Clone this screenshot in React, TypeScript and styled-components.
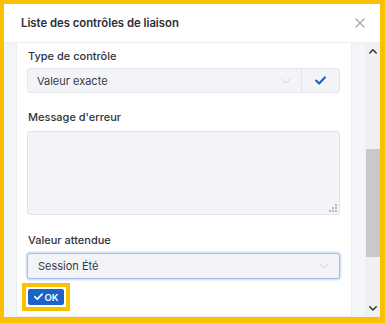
import styled, { createGlobalStyle } from 'styled-components';

const GlobalStyle = createGlobalStyle`
  html, body {
    margin: 0;
    padding: 0;
    background: #ffffff;
  }
  body {
    font-family: Inter, "Noto Sans", "Liberation Sans", sans-serif;
  }
  * {
    box-sizing: border-box;
  }
`;

const Frame = styled.div`
  width: 385px;
  height: 323px;
  border: 4px solid #fbc000;
  border-right-width: 5px;
  border-bottom-width: 6px;
  display: flex;
  flex-direction: column;
  overflow: hidden;
  background: #ffffff;
`;

const Header = styled.header`
  height: 39px;
  flex-shrink: 0;
  display: flex;
  align-items: center;
  justify-content: space-between;
  padding: 0 12px 0 17px;
  border-bottom: 1px solid #eceef3;
`;

const Title = styled.h2`
  margin: 0;
  font-size: 11.3px;
  font-weight: 600;
  color: #2b2e38;
`;

const CloseButton = styled.button`
  width: 16px;
  height: 16px;
  padding: 0;
  border: none;
  background: transparent;
  display: flex;
  align-items: center;
  justify-content: center;
`;

const Body = styled.div`
  flex: 1;
  display: flex;
  background: #f4f5f9;
  padding-left: 12px;
  min-height: 0;
`;

const Card = styled.section`
  width: 336px;
  background: #ffffff;
  border: 1px solid #eaecf1;
  border-top: none;
  border-radius: 0 0 3px 3px;
  padding: 6px 11px 10px 10px;
  display: flex;
  flex-direction: column;
  align-self: flex-start;
`;

const Field = styled.div<{ $gap: number; $after?: number }>`
  display: flex;
  flex-direction: column;
  gap: ${({ $gap }) => $gap}px;
  margin-bottom: ${({ $after }) => $after ?? 0}px;
`;

const Label = styled.label`
  font-size: 11px;
  line-height: 14px;
  font-weight: 500;
  color: #2f3340;
  padding-left: 1px;
`;

const Group = styled.div`
  height: 25px;
  display: flex;
  border: 1px solid #e3e5ea;
  border-radius: 3px;
  background: #f3f4f8;
`;

const SelectBox = styled.div<{ $focused?: boolean }>`
  flex: ${({ $focused }) => ($focused ? '0 0 26px' : '1')};
  height: ${({ $focused }) => ($focused ? 26 : 23)}px;
  display: flex;
  align-items: center;
  justify-content: space-between;
  padding: 0 10px 0 ${({ $focused }) => ($focused ? 10 : 9)}px;
  font-size: 11px;
  color: #363a45;
  background: #f3f4f8;
  border-radius: 3px;
  ${({ $focused }) =>
    $focused &&
    `
    border: 1px solid #a3c0ea;
    box-shadow: 0 0 0 1.5px #d6e3f6;
  `}
`;

const CheckCell = styled.div`
  width: 38px;
  border-left: 1px solid #e1e3e8;
  display: flex;
  align-items: center;
  justify-content: center;
`;

const TextArea = styled.div`
  position: relative;
  height: 84px;
  border: 1px solid #e1e3e8;
  border-radius: 3px;
  background: #f3f4f8;
`;

const Grip = styled.svg`
  position: absolute;
  right: 2px;
  bottom: 2px;
`;

const OkWrap = styled.div`
  margin-top: 10px;
  align-self: flex-start;
  margin-left: 1px;
  outline: 4px solid #fbc000;
  outline-offset: 2px;
  margin-bottom: 1px;
`;

const OkButton = styled.button`
  width: 36px;
  height: 16px;
  padding: 0;
  border: none;
  border-radius: 2px;
  background: #1c63c9;
  color: #ffffff;
  font-family: inherit;
  font-size: 9.5px;
  font-weight: 600;
  display: flex;
  align-items: center;
  justify-content: center;
  gap: 2px;
`;

const Gutter = styled.div`
  width: 13px;
  flex-shrink: 0;
`;

const Scrollbar = styled.div`
  width: 15px;
  flex-shrink: 0;
  background: #f0f0f0;
  display: flex;
  flex-direction: column;
  align-items: center;
`;

const ScrollArrow = styled.div`
  height: 17px;
  width: 15px;
  display: flex;
  align-items: center;
  justify-content: center;
`;

const Track = styled.div`
  flex: 1;
  width: 15px;
  display: flex;
  flex-direction: column;
`;

const Thumb = styled.div`
  margin-top: 89px;
  height: 108px;
  width: 14px;
  margin-left: 1px;
  background: #c9c9c9;
`;

const Chevron = ({ up, color, size = 10, bold }: { up?: boolean; color: string; size?: number; bold?: boolean }) => (
  <svg width={size} height={size * 0.6} viewBox="0 0 10 6">
    <path
      d={up ? 'M1 5 L5 1 L9 5' : 'M1 1 L5 5 L9 1'}
      fill="none"
      stroke={color}
      strokeWidth={bold ? 1.9 : 1}
      strokeLinecap="round"
      strokeLinejoin="round"
    />
  </svg>
);

const Check = ({ color, size }: { color: string; size: number }) => (
  <svg width={size} height={size * 0.8} viewBox="0 0 10 8">
    <path
      d="M1 4.2 L3.7 6.8 L9 1.3"
      fill="none"
      stroke={color}
      strokeWidth={1.9}
      strokeLinecap="round"
      strokeLinejoin="round"
    />
  </svg>
);

export default function App() {
  return (
    <>
      <GlobalStyle />
      <Frame>
        <Header>
          <Title>Liste des contrôles de liaison</Title>
          <CloseButton aria-label="Fermer">
            <svg width="10" height="10" viewBox="0 0 10 10">
              <path d="M0.5 0.5 L9.5 9.5 M9.5 0.5 L0.5 9.5" stroke="#a2a5ab" strokeWidth="1.1" />
            </svg>
          </CloseButton>
        </Header>
        <Body>
          <Card>
            <Field $gap={5} $after={17}>
              <Label>Type de contrôle</Label>
              <Group>
                <SelectBox>
                  Valeur exacte
                  <Chevron color="#cfd2d8" />
                </SelectBox>
                <CheckCell>
                  <Check color="#1c5fc4" size={11} />
                </CheckCell>
              </Group>
            </Field>
            <Field $gap={7} $after={18}>
              <Label>Message d'erreur</Label>
              <TextArea>
                <Grip width="8" height="8" viewBox="0 0 8 8">
                  <rect x="6" y="0" width="2" height="2" fill="#b5b8bf" />
                  <rect x="3" y="3" width="2" height="2" fill="#b5b8bf" />
                  <rect x="6" y="3" width="2" height="2" fill="#b5b8bf" />
                  <rect x="0" y="6" width="2" height="2" fill="#b5b8bf" />
                  <rect x="3" y="6" width="2" height="2" fill="#b5b8bf" />
                  <rect x="6" y="6" width="2" height="2" fill="#b5b8bf" />
                </Grip>
              </TextArea>
            </Field>
            <Field $gap={6}>
              <Label>Valeur attendue</Label>
              <SelectBox $focused>
                Session Été
                <Chevron color="#cfd2d8" />
              </SelectBox>
            </Field>
            <OkWrap>
              <OkButton>
                <Check color="#ffffff" size={9} />
                OK
              </OkButton>
            </OkWrap>
          </Card>
          <Gutter />
          <Scrollbar>
            <ScrollArrow>
              <Chevron up bold color="#333333" size={8} />
            </ScrollArrow>
            <Track>
              <Thumb />
            </Track>
            <ScrollArrow>
              <Chevron bold color="#333333" size={8} />
            </ScrollArrow>
          </Scrollbar>
        </Body>
      </Frame>
    </>
  );
}
